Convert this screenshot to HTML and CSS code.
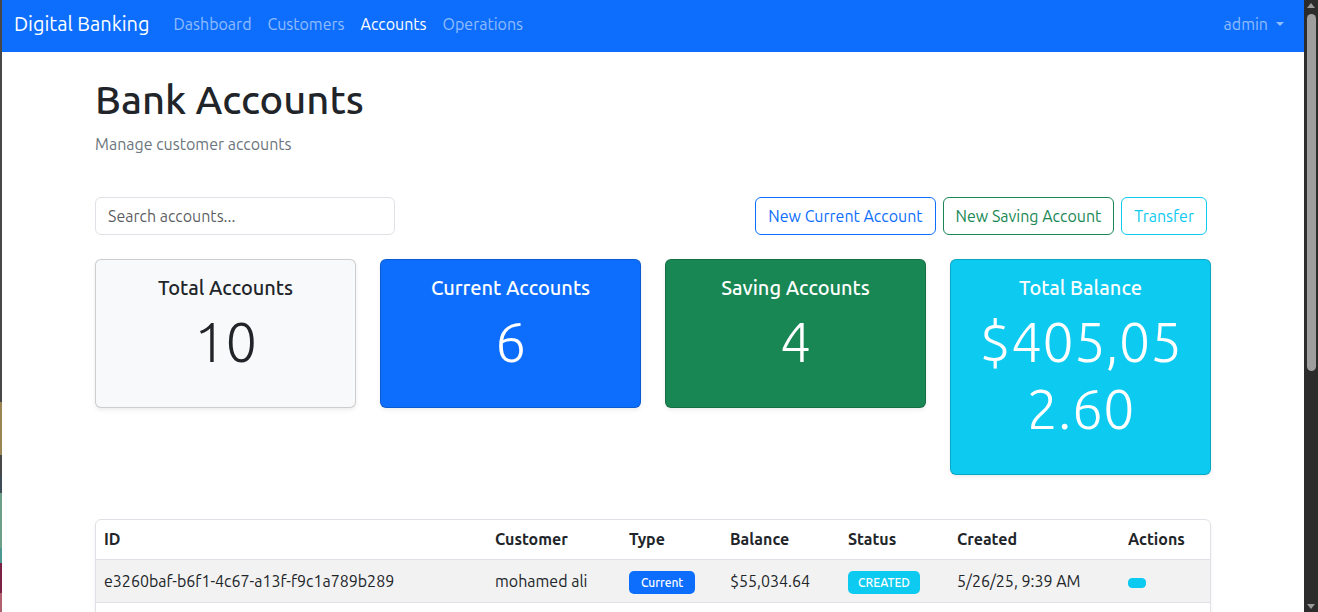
FILE: index.html
```html
<!DOCTYPE html>
<html lang="en">
<head>
<meta charset="utf-8">
<title>Digital Banking - Accounts</title>
<link rel="stylesheet" href="styles.css">
</head>
<body>
<div class="screen">
  <div class="edge"></div>
  <div class="window">
    <nav class="navbar">
      <div class="nav-left">
        <a class="brand" href="#">Digital Banking</a>
        <ul class="nav-links">
          <li><a class="nav-link" href="#">Dashboard</a></li>
          <li><a class="nav-link" href="#">Customers</a></li>
          <li><a class="nav-link active" href="#">Accounts</a></li>
          <li><a class="nav-link" href="#">Operations</a></li>
        </ul>
      </div>
      <a class="nav-link user-toggle" href="#">admin<span class="caret"></span></a>
    </nav>

    <main class="container">
      <header class="page-header">
        <h1 class="page-title">Bank Accounts</h1>
        <p class="page-subtitle">Manage customer accounts</p>
      </header>

      <div class="toolbar">
        <input class="search-input" type="text" placeholder="Search accounts...">
        <div class="toolbar-actions">
          <button class="btn btn-outline-primary">New Current Account</button>
          <button class="btn btn-outline-success">New Saving Account</button>
          <button class="btn btn-outline-info">Transfer</button>
        </div>
      </div>

      <section class="stats">
        <div class="stat-card stat-light">
          <h5 class="stat-title">Total Accounts</h5>
          <p class="stat-value">10</p>
        </div>
        <div class="stat-card stat-primary">
          <h5 class="stat-title">Current Accounts</h5>
          <p class="stat-value">6</p>
        </div>
        <div class="stat-card stat-success">
          <h5 class="stat-title">Saving Accounts</h5>
          <p class="stat-value">4</p>
        </div>
        <div class="stat-card stat-info">
          <h5 class="stat-title">Total Balance</h5>
          <p class="stat-value">$405,052.60</p>
        </div>
      </section>

      <div class="table-wrap">
        <table class="accounts-table">
          <colgroup>
            <col class="col-id">
            <col class="col-customer">
            <col class="col-type">
            <col class="col-balance">
            <col class="col-status">
            <col class="col-created">
            <col class="col-actions">
          </colgroup>
          <thead>
            <tr>
              <th>ID</th>
              <th>Customer</th>
              <th>Type</th>
              <th>Balance</th>
              <th>Status</th>
              <th>Created</th>
              <th>Actions</th>
            </tr>
          </thead>
          <tbody>
            <tr class="striped">
              <td>e3260baf-b6f1-4c67-a13f-f9c1a789b289</td>
              <td>mohamed ali</td>
              <td><span class="badge badge-primary">Current</span></td>
              <td>$55,034.64</td>
              <td><span class="badge badge-info">CREATED</span></td>
              <td>5/26/25, 9:39 AM</td>
              <td><button class="btn-action" aria-label="View"></button></td>
            </tr>
            <tr>
              <td>&nbsp;</td>
              <td></td>
              <td></td>
              <td></td>
              <td></td>
              <td></td>
              <td></td>
            </tr>
            <tr class="striped">
              <td>&nbsp;</td>
              <td></td>
              <td></td>
              <td></td>
              <td></td>
              <td></td>
              <td></td>
            </tr>
          </tbody>
        </table>
      </div>
    </main>
  </div>
  <div class="scrollbar">
    <span class="arrow-up"></span>
    <span class="thumb"></span>
    <span class="arrow-down"></span>
  </div>
</div>
</body>
</html>
```

FILE: styles.css
```css
* { box-sizing: border-box; }

html, body {
  margin: 0;
  padding: 0;
  height: 100%;
  overflow: hidden;
}

body {
  font-family: "Ubuntu", Roboto, "Liberation Sans", sans-serif;
  font-size: 16px;
  line-height: 1.5;
  color: #212529;
  background: #fff;
}

.screen {
  display: flex;
  height: 612px;
}

.edge {
  width: 2px;
  flex: 0 0 2px;
  background: linear-gradient(to bottom,
    #474747 0px, #474747 402px,
    #9a8652 402px, #9a8652 455px,
    #474747 455px, #474747 475px,
    #3e4c58 475px, #3e4c58 493px,
    #6b9f8a 493px, #6b9f8a 548px,
    #4c9890 548px, #4c9890 563px,
    #7a2244 563px, #7a2244 593px,
    #b0606f 593px, #b0606f 612px);
}

.window {
  flex: 1 1 auto;
  min-width: 0;
  background: #fff;
  overflow: hidden;
}

/* Navbar */
.navbar {
  height: 52px;
  background: #0d6efd;
  display: flex;
  align-items: center;
  justify-content: space-between;
  padding: 0 12px 4px;
}

.nav-left {
  display: flex;
  align-items: center;
}

.brand {
  font-size: 20px;
  color: #fff;
  text-decoration: none;
  margin-right: 16px;
  line-height: 30px;
}

.nav-links {
  display: flex;
  list-style: none;
  margin: 0;
  padding: 0;
}

.nav-link {
  display: block;
  padding: 8px;
  color: rgba(255, 255, 255, 0.55);
  text-decoration: none;
  font-size: 16px;
  line-height: 24px;
}

.nav-link.active {
  color: #fff;
}

.user-toggle {
  display: flex;
  align-items: center;
}

.caret {
  display: inline-block;
  margin-left: 8px;
  width: 0;
  height: 0;
  border-top: 4.8px solid rgba(255, 255, 255, 0.55);
  border-left: 4.8px solid transparent;
  border-right: 4.8px solid transparent;
}

/* Main container */
.container {
  max-width: 1140px;
  margin: 0 auto;
  padding: 24px 12px 0;
}

.page-title {
  margin: 0 0 8px;
  font-size: 40px;
  font-weight: 500;
  line-height: 48px;
}

.page-subtitle {
  margin: 0 0 41px;
  color: #6c757d;
  line-height: 24px;
}

/* Toolbar */
.toolbar {
  display: flex;
  justify-content: space-between;
  align-items: center;
  margin-bottom: 24px;
}

.search-input {
  width: 300px;
  height: 38px;
  padding: 6px 12px;
  font-family: inherit;
  font-size: 16px;
  color: #212529;
  border: 1px solid #dee2e6;
  border-radius: 6px;
  background: #fff;
}

.search-input::placeholder {
  color: rgba(33, 37, 41, 0.75);
}

.toolbar-actions {
  display: flex;
  gap: 7px;
  padding-right: 4px;
}

.btn {
  height: 38px;
  padding: 6px 12px;
  font-family: inherit;
  font-size: 16px;
  line-height: 24px;
  background: transparent;
  border: 1px solid;
  border-radius: 6px;
  cursor: pointer;
}

.btn-outline-primary { color: #0d6efd; border-color: #0d6efd; }
.btn-outline-success { color: #198754; border-color: #198754; }
.btn-outline-info { color: #0dcaf0; border-color: #0dcaf0; }

/* Stat cards */
.stats {
  display: grid;
  grid-template-columns: repeat(4, minmax(0, 1fr));
  gap: 24px;
  align-items: start;
  margin-bottom: 44px;
}

.stat-card {
  min-width: 0;
  border: 1px solid rgba(0, 0, 0, 0.175);
  border-radius: 6px;
  padding: 16px;
  text-align: center;
  overflow-wrap: break-word;
  word-wrap: break-word;
  box-shadow: 0 2px 4px rgba(0, 0, 0, 0.075);
}

.stat-title {
  margin: 0 0 8px;
  font-size: 20px;
  font-weight: 500;
  line-height: 24px;
}

.stat-value {
  margin: 0 0 16px;
  font-size: 56px;
  font-weight: 300;
  line-height: 67.2px;
}

.stat-light { background: #f8f9fa; color: #212529; }
.stat-primary { background: #0d6efd; color: #fff; }
.stat-success { background: #198754; color: #fff; }
.stat-info { background: #0dcaf0; color: #fff; }

/* Table */
.table-wrap {
  border: 1px solid #dee2e6;
  border-radius: 6px;
  overflow: hidden;
  box-shadow: 0 2px 4px rgba(0, 0, 0, 0.05);
}

.accounts-table {
  width: 100%;
  border-collapse: collapse;
  table-layout: fixed;
}

.col-id { width: 391px; }
.col-customer { width: 134px; }
.col-type { width: 101px; }
.col-balance { width: 118px; }
.col-status { width: 109px; }
.col-created { width: 171px; }
.col-actions { width: 90px; }

.accounts-table th,
.accounts-table td {
  padding: 8px;
  text-align: left;
  vertical-align: middle;
  border-bottom: 1px solid #dee2e6;
  line-height: 24px;
  white-space: nowrap;
}

.accounts-table th {
  font-weight: 700;
  padding: 7px 8px 8px;
}

.accounts-table td {
  height: 42px;
}

.accounts-table tr.striped td {
  background: #f2f2f2;
}

.badge {
  display: inline-block;
  padding: 4px 12px;
  font-size: 12px;
  font-weight: 500;
  line-height: 15px;
  color: #fff;
  border-radius: 5px;
  vertical-align: middle;
}

.badge-primary { background: #0d6efd; }
.badge-info { background: #0dcaf0; padding: 4px 10px; }

.btn-action {
  display: inline-block;
  width: 18px;
  height: 10px;
  padding: 0;
  border: 1px solid #0dcaf0;
  border-radius: 4px;
  background: #0dcaf0;
  vertical-align: middle;
}

/* Fake scrollbar */
.scrollbar {
  flex: 0 0 14px;
  width: 14px;
  background: #2c2c2c;
  position: relative;
}

.arrow-up,
.arrow-down {
  position: absolute;
  left: 3px;
  width: 0;
  height: 0;
  border-left: 4px solid transparent;
  border-right: 4px solid transparent;
}

.arrow-up {
  top: 3px;
  border-bottom: 5px solid #9a9a9a;
}

.arrow-down {
  bottom: 3px;
  border-top: 5px solid #9a9a9a;
}

.thumb {
  position: absolute;
  top: 14px;
  left: 3px;
  width: 9px;
  height: 357px;
  border-radius: 5px;
  background: #9e9e9e;
}
```
